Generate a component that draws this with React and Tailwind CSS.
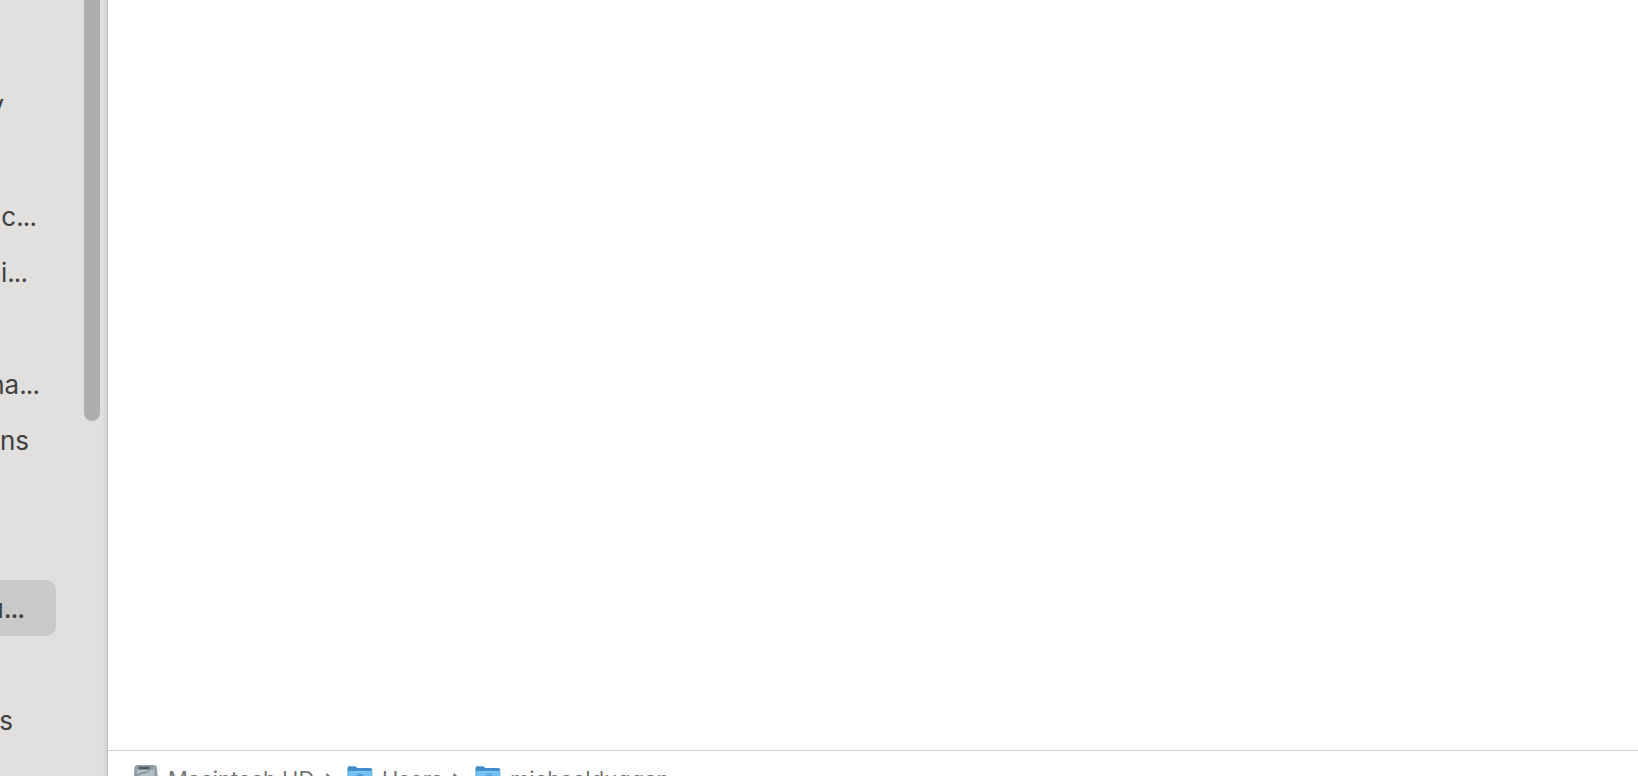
import React from 'react';

const sidebarRows = [
  { label: 'y', width: 'w-[4px]' },
  { label: '', width: 'w-0' },
  { label: 'c', more: true, width: 'w-[36px]' },
  { label: 'i', more: true, width: 'w-[27px]' },
  { label: '', width: 'w-0' },
  { label: 'na', more: true, width: 'w-[39px]' },
  { label: 'ns', width: 'w-[29px]' },
  { label: '', width: 'w-0' },
  { label: '', width: 'w-0' },
  { label: 'u', more: true, width: 'w-[24px]', selected: true },
  { label: '', width: 'w-0' },
  { label: 's', width: 'w-[13px]' },
];

function DriveIcon() {
  return (
    <svg width="26" height="28" viewBox="0 0 26 28" className="shrink-0">
      <path d="M4 0h17q2.5 0 2.8 2.5L26 24q0 3-3 3H3q-3 0-3-3L1.5 2.5Q1.8 0 4 0z" fill="#929ea5" />
      <path d="M4.5 1h16.5l1.2 18H3z" fill="#b2c0c8" />
      <path d="M4.5 1h16v3.8h-16z" fill="#8b969c" />
      <path d="M5.5 1.8h11v2.4h-11z" fill="#53595c" />
      <path d="M3 12q3-4 9-4.500q4-.5 5-2.500" fill="none" stroke="#7f8d95" strokeWidth="1.3" />
    </svg>
  );
}

function FolderIcon({ home }) {
  return (
    <svg width="26" height="26" viewBox="0 0 26 26" className="shrink-0">
      <path d="M.5 2Q.5.3 2 .3h5.500q1.200 0 2 1l1 .7h13q1.500 0 1.500 1.700V12H.5z" fill="#3f8dcb" />
      <path d="M.5 5.500h25v14.500q0 2-2 2h-21q-2 0-2-2z" fill="#74c0f1" />
      <path d="M.5 5.200h25v1H.5z" fill="#8fcef7" />
      {home ? (
        <path d="M8 13l5-5 5 5M10 12v5h6v-5M16 7.500v3" fill="none" stroke="#559fd3" strokeWidth="1.3" />
      ) : (
        <circle cx="13" cy="11.5" r="4" fill="#4f9fd6" />
      )}
    </svg>
  );
}

function Chevron() {
  return (
    <svg width="8" height="12" viewBox="0 0 8 12" fill="none" stroke="#777" strokeWidth="2.2" className="shrink-0">
      <path d="M1.5 1l5 5-5 5" />
    </svg>
  );
}

function Sidebar() {
  return (
    <aside className="flex h-full w-[108px] shrink-0 bg-[#e1e0de]">
      <div className="w-[56px] shrink-0 pt-[76px] text-[26px] leading-none text-[#414140]">
        {sidebarRows.map((row, i) => (
          <div
            key={i}
            className={`flex h-14 items-center overflow-hidden pt-0.5 ${row.selected ? 'rounded-r-[10px] bg-[#c9c9c7] font-medium' : ''}`}
          >
            <span className={`flex shrink-0 justify-end whitespace-nowrap ${row.width}`}>
              {row.label}
              {row.more && <span className={row.selected ? 'tracking-[-1.1px]' : 'tracking-[-0.9px]'}>...</span>}
            </span>
          </div>
        ))}
      </div>
      <div className="ml-7 h-[421px] w-4 rounded-b-full bg-[#afaeac]" />
      <div className="ml-auto h-full w-[5px] border-r border-[#bebdbc] bg-linear-to-r from-[#dfdedc] to-[#d2d1cf]" />
    </aside>
  );
}

function PathBar() {
  return (
    <footer className="flex h-14 shrink-0 items-center border-t border-[#d0d0d0] pl-[25px] text-[22px] leading-none text-[#757575]">
      <DriveIcon />
      <span className="ml-[9px] w-[148px] whitespace-nowrap">Macintosh HD</span>
      <span className="ml-[9px] flex w-[22px]"><Chevron /></span>
      <FolderIcon />
      <span className="ml-[9px] w-[61px] whitespace-nowrap">Users</span>
      <span className="ml-[9px] flex w-[23px]"><Chevron /></span>
      <FolderIcon home />
      <span className="ml-[9px] whitespace-nowrap">michaelduggan</span>
    </footer>
  );
}

export default function App() {
  return (
    <div className="flex h-[776px] w-full overflow-hidden bg-white font-['Inter','Liberation_Sans',sans-serif]">
      <Sidebar />
      <main className="flex min-w-0 flex-1 flex-col">
        <div className="h-[750px] shrink-0" />
        <PathBar />
      </main>
    </div>
  );
}
